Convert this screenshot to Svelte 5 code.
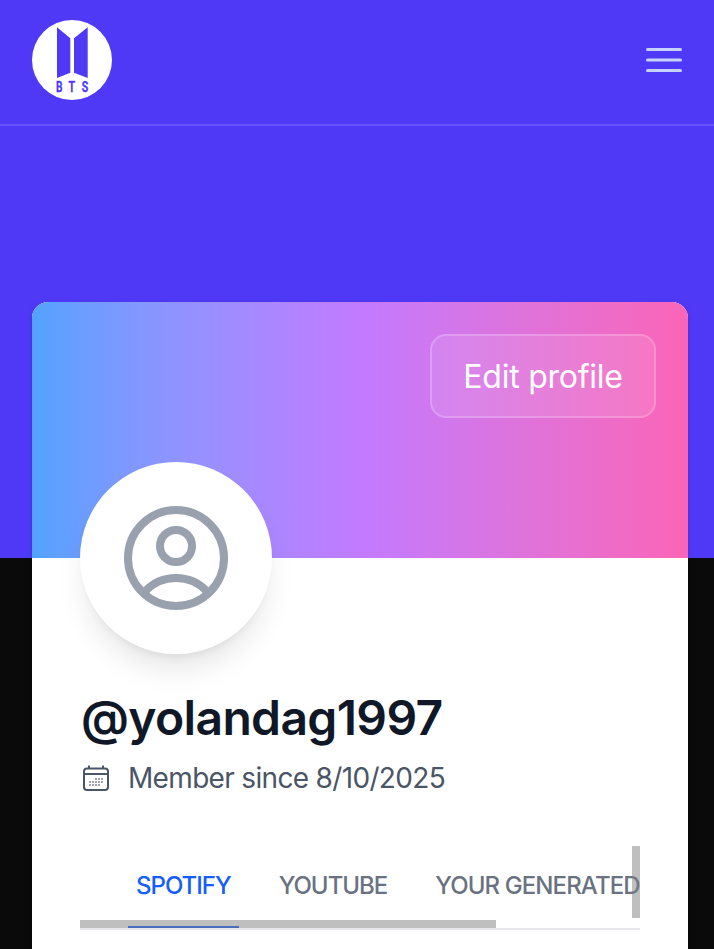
<script lang="ts">
  interface ITab {
    id: string;
    label: string;
  }

  const tabs: ITab[] = [
    { id: "spotify", label: "SPOTIFY" },
    { id: "youtube", label: "YOUTUBE" },
    { id: "generated", label: "YOUR GENERATED" },
  ];

  // calendar day dots, [x, y]
  const days = [
    [15, 16], [18, 16], [21, 16],
    [9, 19], [12, 19], [15, 19], [18, 19], [21, 19],
    [9, 22], [12, 22], [15, 22], [18, 22],
  ];

  let username = "yolandag1997";
  let memberSince = "8/10/2025";
  let activeTab = "spotify";
</script>

<div class="page">
  <div class="hero">
    <header>
      <svg class="logo" viewBox="0 0 80 80" aria-label="BTS">
        <circle cx="40" cy="40" r="40" fill="#fff" />
        <path d="M25 7.3 38.3 18.3V52.7L25 58Z M55.7 7.3 42 18.3V52.7L55.7 58Z" />
        <text x="24" y="72.3" textLength="6.5" lengthAdjust="spacingAndGlyphs">B</text>
        <text x="36.6" y="72.3" textLength="6.5" lengthAdjust="spacingAndGlyphs">T</text>
        <text x="49.7" y="72.3" textLength="6.5" lengthAdjust="spacingAndGlyphs">S</text>
      </svg>
      <button class="menu" aria-label="Open menu">
        <svg viewBox="0 0 48 48">
          <path d="M7.5 13.5h33M7.5 24h33M7.5 34.5h33" />
        </svg>
      </button>
    </header>
  </div>

  <main class="card">
    <div class="cover">
      <button class="edit"><span>Edit profile</span></button>
      <div class="avatar">
        <svg viewBox="0 0 104 104">
          <circle cx="52" cy="52" r="48" />
          <circle cx="52" cy="40" r="16" />
          <path d="M21.5 85C29 77 40 72 52 72s23 5 30.5 13" />
        </svg>
      </div>
    </div>

    <div class="details">
      <h1>@{username}</h1>
      <p class="member">
        <svg viewBox="0 0 32 32">
          <rect x="4" y="6.5" width="24" height="21.5" rx="3" />
          <path d="M4 12h24M9 3.5v3M23 3.5v3" />
          {#each days as [x, y]}
            <rect class="day" {x} {y} width="2" height="2" />
          {/each}
        </svg>
        <span>Member since {memberSince}</span>
      </p>

      <nav>
        <div class="tabs">
          {#each tabs as tab (tab.id)}
            <button
              class="tab {tab.id}"
              class:active={tab.id === activeTab}
              on:click={() => (activeTab = tab.id)}
            >
              {tab.label}
            </button>
          {/each}
        </div>
        <span class="thumb vertical"></span>
        <span class="thumb horizontal"></span>
      </nav>
    </div>
  </main>
</div>

<style>
  :global(body) {
    margin: 0;
    background: #0a0a0a;
  }

  button {
    margin: 0;
    padding: 0;
    border: none;
    background: none;
    font: inherit;
    color: inherit;
    cursor: pointer;
  }

  .page {
    height: 949px;
    overflow: hidden;
    font-family: Inter, "Open Sans", sans-serif;
  }

  .hero {
    height: 558px;
    background: #4f39f6;
  }

  header {
    box-sizing: border-box;
    height: 126px;
    padding: 20px 26px 24px 32px;
    display: flex;
    align-items: center;
    justify-content: space-between;
    border-bottom: 2px solid #6754fa;
  }

  .logo {
    width: 80px;
    height: 80px;
    fill: #4f39f6;
  }

  .logo text {
    font: 700 15px Roboto, sans-serif;
    stroke: #4f39f6;
    stroke-width: 0.3;
  }

  .menu svg {
    display: block;
    width: 48px;
    height: 48px;
    stroke: #c6d2ff;
    stroke-width: 3;
    stroke-linecap: round;
  }

  .card {
    position: relative;
    width: 656px;
    height: 800px;
    margin: -256px 0 0 32px;
    background: #fff;
    border-radius: 16px;
    box-shadow: 0 2px 6px rgba(0, 0, 0, 0.1), 0 2px 4px -2px rgba(0, 0, 0, 0.1);
  }

  .cover {
    position: relative;
    box-sizing: border-box;
    height: 256px;
    padding: 32px;
    display: flex;
    justify-content: flex-end;
    align-items: flex-start;
    border-radius: 16px 16px 0 0;
    background: linear-gradient(to right in oklab, #51a2ff, #c27aff, #fb64b6);
  }

  .edit {
    box-sizing: border-box;
    width: 226px;
    height: 84px;
    border: 2px solid rgba(255, 255, 255, 0.2);
    border-radius: 16px;
    background: rgba(255, 255, 255, 0.1);
    color: #fff;
    font-size: 32px;
    letter-spacing: -0.25px;
    white-space: nowrap;
  }

  .avatar {
    position: absolute;
    left: 48px;
    bottom: -96px;
    width: 192px;
    height: 192px;
    display: flex;
    align-items: center;
    justify-content: center;
    border-radius: 50%;
    background: #fff;
    box-shadow: 0 20px 30px -6px rgba(0, 0, 0, 0.1),
      0 8px 12px -8px rgba(0, 0, 0, 0.1);
  }

  .avatar svg {
    width: 104px;
    height: 104px;
    fill: none;
    stroke: #99a1af;
    stroke-width: 8;
  }

  .details {
    padding: 128px 48px 0;
  }

  h1 {
    margin: 0;
    padding-left: 1px;
    color: #101828;
    font-size: 48px;
    font-weight: 600;
    line-height: 64px;
    letter-spacing: -0.65px;
    white-space: nowrap;
  }

  .member {
    margin: 8px 0 0;
    display: flex;
    align-items: center;
    gap: 16px;
    color: #4a5565;
    font-size: 28px;
    line-height: 40px;
    letter-spacing: -0.67px;
    white-space: nowrap;
  }

  .member svg {
    width: 32px;
    height: 32px;
    fill: none;
    stroke: #4a5565;
    stroke-width: 2;
  }

  .member .day {
    fill: #a0a5ad;
    stroke: none;
  }

  nav {
    position: relative;
    margin-top: 48px;
    border-bottom: 2px solid #e5e7eb;
  }

  .tabs {
    display: flex;
    gap: 32px;
    height: 82px;
    padding-left: 48px;
    overflow: hidden;
  }

  .tab {
    flex: none;
    box-sizing: border-box;
    padding: 0 8px;
    border-bottom: 2px solid transparent;
    color: #6a7282;
    font-size: 24px;
    font-weight: 500;
    line-height: 80px;
    letter-spacing: -1px;
    white-space: nowrap;
  }

  .tab.generated {
    padding-right: 0;
    letter-spacing: -0.9px;
  }

  .tab.active {
    color: #155dfc;
    border-color: #155dfc;
  }

  .thumb {
    position: absolute;
    background: rgba(128, 128, 128, 0.5);
  }

  .vertical {
    top: 0;
    right: 0;
    width: 8px;
    height: 72px;
  }

  .horizontal {
    left: 0;
    bottom: 0;
    width: 416px;
    height: 8px;
  }
</style>
